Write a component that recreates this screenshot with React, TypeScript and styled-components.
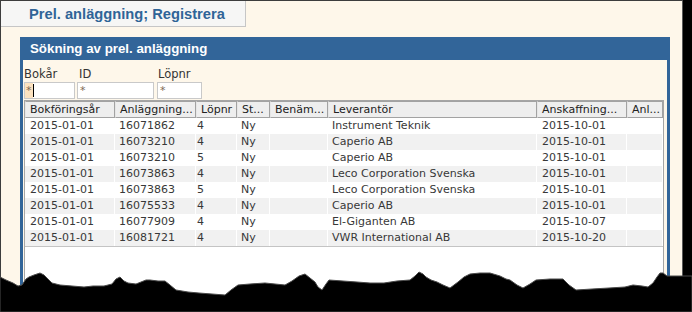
import styled, { createGlobalStyle } from "styled-components"

const GlobalStyle = createGlobalStyle`
  html, body {
    margin: 0;
    padding: 0;
    background: #000;
  }
  body {
    font-family: "DejaVu Sans", Verdana, sans-serif;
  }
`

const columns = [
  { label: "Bokföringsår", width: 90, pad: 5 },
  { label: "Anläggning...", width: 81, pad: 4 },
  { label: "Löpnr", width: 41, pad: 1 },
  { label: "St...", width: 33, pad: 4 },
  { label: "Benäm...", width: 58, pad: 3 },
  { label: "Leverantör", width: 209, pad: 4 },
  { label: "Anskaffning...", width: 90, pad: 5 },
  { label: "Anl...", width: 36, pad: 4 },
]

const rows = [
  ["2015-01-01", "16071862", "4", "Ny", "", "Instrument Teknik", "2015-10-01", ""],
  ["2015-01-01", "16073210", "4", "Ny", "", "Caperio AB", "2015-10-01", ""],
  ["2015-01-01", "16073210", "5", "Ny", "", "Caperio AB", "2015-10-01", ""],
  ["2015-01-01", "16073863", "4", "Ny", "", "Leco Corporation Svenska", "2015-10-01", ""],
  ["2015-01-01", "16073863", "5", "Ny", "", "Leco Corporation Svenska", "2015-10-01", ""],
  ["2015-01-01", "16075533", "4", "Ny", "", "Caperio AB", "2015-10-01", ""],
  ["2015-01-01", "16077909", "4", "Ny", "", "El-Giganten AB", "2015-10-07", ""],
  ["2015-01-01", "16081721", "4", "Ny", "", "VWR International AB", "2015-10-20", ""],
]

const gridTemplate = columns.map((c) => `${c.width}px`).join(" ")

const Screen = styled.div`
  position: relative;
  width: 692px;
  height: 312px;
  overflow: hidden;
  background: #000;
`

const Window = styled.div`
  box-sizing: border-box;
  width: 683px;
  height: 312px;
  background: #fef7ea;
  border-top: 1px solid #3d3d3d;
  border-left: 1px solid #3d3d3d;
  border-right: 1px solid #5a5a5a;
`

const Tab = styled.div`
  box-sizing: border-box;
  width: 245px;
  height: 26px;
  padding-left: 28px;
  display: flex;
  align-items: center;
  background: #f6f6f5;
  border-right: 1px solid #c6c6c6;
  border-bottom: 1px solid #c6c6c6;
  color: #2f6497;
  font: bold 14.7px "Liberation Sans", Arial, sans-serif;
  white-space: nowrap;
`

const Panel = styled.section`
  box-sizing: border-box;
  margin: 10px 0 0 19px;
  width: 650px;
  height: 280px;
  padding: 0 3px;
  background: #326599;
  display: flex;
  flex-direction: column;
`

const PanelTitle = styled.h2`
  margin: 0;
  height: 23px;
  padding-left: 7px;
  display: flex;
  align-items: center;
  color: #fff;
  font: bold 13.3px "Liberation Sans", Arial, sans-serif;
  white-space: nowrap;
`

const PanelBody = styled.div`
  flex: 1;
  background: #fef7ea;
  padding: 6px 0 0 1px;
  display: flex;
  flex-direction: column;
`

const SearchRow = styled.div`
  display: flex;
  gap: 2px;
`

const Field = styled.label<{ $w: number; $shift?: number }>`
  width: ${(p) => p.$w}px;
  margin-left: ${(p) => p.$shift ?? 0}px;
  display: flex;
  flex-direction: column;
`

const LabelText = styled.span<{ $pad: number }>`
  height: 16px;
  line-height: 16px;
  padding-left: ${(p) => p.$pad}px;
  font-size: 11.5px;
  color: #333;
`

const InputBox = styled.div`
  box-sizing: border-box;
  height: 17px;
  border: 1px solid #c9c9c9;
  background: #fff;
  display: flex;
  align-items: stretch;
`

const Star = styled.span<{ $focus?: boolean }>`
  display: flex;
  align-items: center;
  padding: 0 ${(p) => (p.$focus ? "1px" : "2px")};
  width: ${(p) => (p.$focus ? "6px" : "auto")};
  background: ${(p) => (p.$focus ? "#fde3c0" : "transparent")};
  color: #7d6a52;
  font-size: 11px;
`

const Caret = styled.span`
  align-self: center;
  width: 1px;
  height: 13px;
  background: #000;
`

const Table = styled.div`
  box-sizing: border-box;
  flex: 1;
  width: 640px;
  margin-top: 1px;
  border: 1px solid #a5a5a5;
  border-bottom: none;
  background: #fff;
`

const HeadRow = styled.div`
  display: grid;
  grid-template-columns: ${gridTemplate};
  height: 17px;
`

const HeadCell = styled.div<{ $pad: number }>`
  box-sizing: border-box;
  padding-left: ${(p) => p.$pad}px;
  border: 1px solid #a2a2a2;
  border-left-color: #e6e6e6;
  background: #eeeeee;
  line-height: 15px;
  font-size: 11px;
  color: #222;
  white-space: nowrap;
  overflow: hidden;
`

const Rows = styled.div`
  border-bottom: 1px solid #c4c4c4;
`

const DataRow = styled.div<{ $odd: boolean }>`
  display: grid;
  grid-template-columns: ${gridTemplate};
  height: 16px;
  background: ${(p) => (p.$odd ? "#f1f1f1" : "#fff")};
`

const DataCell = styled.div<{ $pad: number }>`
  box-sizing: border-box;
  padding-left: ${(p) => p.$pad}px;
  border-right: 1px solid #fff;
  line-height: 16px;
  font-size: 11px;
  color: #383838;
  white-space: nowrap;
  overflow: hidden;
`

const TornEdge = styled.svg`
  position: absolute;
  left: 0;
  top: 0;
`

const tornPoints = [
  [0, 277], [6, 280], [13, 283], [18, 286], [22, 285], [26, 279], [29, 277], [34, 275],
  [40, 273], [44, 275], [47, 278], [52, 283], [60, 285], [72, 286], [84, 287], [93, 286],
  [104, 286], [112, 284], [116, 279], [120, 277], [124, 281], [128, 283], [136, 284],
  [141, 282], [146, 280], [150, 280], [158, 281], [165, 281], [170, 285], [176, 290],
  [188, 292], [199, 293], [212, 294], [225, 295], [231, 290], [238, 285], [250, 284],
  [265, 283], [275, 284], [285, 285], [292, 281], [299, 276], [305, 274], [310, 278],
  [315, 282], [318, 287], [322, 290], [326, 284], [329, 280], [343, 281], [357, 282],
  [370, 283], [384, 283], [397, 281], [410, 280], [415, 276], [419, 272], [423, 274],
  [426, 277], [431, 280], [437, 282], [443, 285], [450, 288], [458, 282], [464, 277],
  [470, 274], [480, 273], [490, 273], [500, 276], [506, 279], [510, 280], [517, 285],
  [523, 288], [530, 284], [536, 280], [550, 279], [563, 279], [569, 285], [576, 290],
  [592, 289], [609, 288], [625, 287], [633, 285], [642, 286], [648, 287], [653, 283],
  [657, 277], [660, 273], [663, 273], [667, 276], [692, 276],
]

const tornPath =
  "M" + tornPoints.map(([x, y]) => `${x} ${y}`).join(" L") + " L692 312 L0 312 Z"

export default function App() {
  return (
    <>
      <GlobalStyle />
      <Screen>
        <Window>
          <Tab>Prel. anläggning; Registrera</Tab>
          <Panel>
            <PanelTitle>Sökning av prel. anläggning</PanelTitle>
            <PanelBody>
              <SearchRow>
                <Field $w={51}>
                  <LabelText $pad={0}>Bokår</LabelText>
                  <InputBox>
                    <Star $focus>*</Star>
                    <Caret />
                  </InputBox>
                </Field>
                <Field $w={77}>
                  <LabelText $pad={2}>ID</LabelText>
                  <InputBox>
                    <Star>*</Star>
                  </InputBox>
                </Field>
                <Field $w={45} $shift={1}>
                  <LabelText $pad={1}>Löpnr</LabelText>
                  <InputBox>
                    <Star>*</Star>
                  </InputBox>
                </Field>
              </SearchRow>
              <Table>
                <HeadRow>
                  {columns.map((c) => (
                    <HeadCell key={c.label} $pad={4}>
                      {c.label}
                    </HeadCell>
                  ))}
                </HeadRow>
                <Rows>
                  {rows.map((r, i) => (
                    <DataRow key={i} $odd={i % 2 === 1}>
                      {r.map((v, j) => (
                        <DataCell key={j} $pad={columns[j].pad}>
                          {v}
                        </DataCell>
                      ))}
                    </DataRow>
                  ))}
                </Rows>
              </Table>
            </PanelBody>
          </Panel>
        </Window>
        <TornEdge width="692" height="312" viewBox="0 0 692 312">
          <path d={tornPath} fill="#000" stroke="#4a4a4a" strokeWidth="1" />
        </TornEdge>
      </Screen>
    </>
  )
}
